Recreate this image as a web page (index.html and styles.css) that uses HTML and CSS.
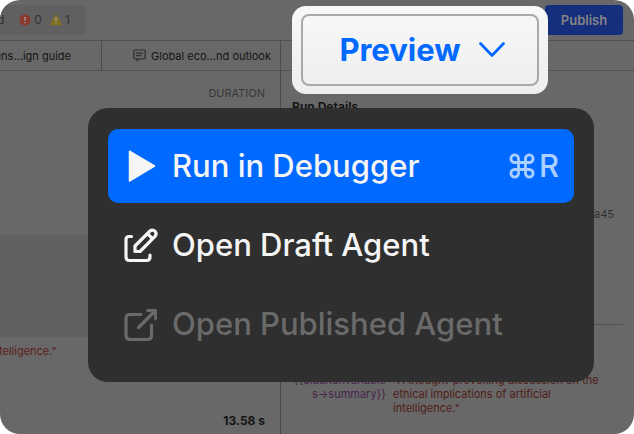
FILE: index.html
```html
<!DOCTYPE html>
<html lang="en">
<head>
<meta charset="utf-8">
<meta name="viewport" content="width=device-width, initial-scale=1">
<title>Agent debugger</title>
<link rel="stylesheet" href="styles.css">
</head>
<body>
<div class="app">
  <header class="toolbar">
    <div class="status">
      <span>d</span>
      <span class="issue">
        <svg class="issue-icon" viewBox="0 0 12 12" aria-hidden="true"><path d="M6 0 11.3 3v6L6 12 .7 9V3Z" fill="#8c372b"/><path d="M6 3v3.6M6 8v1.2" stroke="#a0a0a0" stroke-width="1.4"/></svg>
        0
      </span>
      <span class="issue">
        <svg class="issue-icon" viewBox="0 0 12 12" aria-hidden="true"><path d="M6 1.2 11.3 10.6H.7Z" fill="#81701f" stroke="#81701f" stroke-width="1.4" stroke-linejoin="round"/><path d="M6 3.6v3.6M6 8.4v1.2" stroke="#a0a0a0" stroke-width="1.4"/></svg>
        1
      </span>
    </div>
    <button class="publish" type="button">Publish</button>
  </header>

  <nav class="tabs">
    <a class="tab tab-first" href="#guide">ens...ign guide</a>
    <a class="tab tab-second" href="#outlook">
      <svg class="chat-icon" viewBox="0 0 13 13" fill="none" stroke="#2f2f2f" stroke-width="1.2" stroke-linecap="round" stroke-linejoin="round" aria-hidden="true"><path d="M2.2 1h8.6Q12.2 1 12.2 2.4v6Q12.2 9.8 10.8 9.8H6.4L4.2 11.8V9.8h-2Q.8 9.8.8 8.4v-6Q.8 1 2.2 1ZM3.4 4.1h6.2M3.4 6.7h4.4"/></svg>
      Global eco...nd outlook
    </a>
    <span class="tab-space"></span>
  </nav>

  <main class="content">
    <section class="log">
      <div class="log-head">DURATION</div>
      <div class="log-band"></div>
      <div class="log-text">telligence."</div>
      <div class="log-time">13.58 s</div>
    </section>
    <section class="details">
      <h2 class="details-title">Run Details</h2>
      <div class="run-id">a45</div>
      <hr class="rule">
      <dl class="variable">
        <dt>{{$launchvariable<br>s→summary}}</dt>
        <dd>"A thought-provoking discussion on the ethical implications of artificial intelligence."</dd>
      </dl>
    </section>
  </main>

  <div class="preview">
    <div class="preview-card">
      <button class="preview-button" type="button">
        Preview
        <svg class="chevron" viewBox="0 0 26 16" fill="none" stroke="#0069ff" stroke-width="2.7" stroke-linecap="round" stroke-linejoin="round" aria-hidden="true"><path d="M1.5 1.5 13 13.5 24.5 1.5"/></svg>
      </button>
    </div>
    <div class="menu">
      <button class="item item-active" type="button">
        <svg class="item-icon" viewBox="0 0 36 36" aria-hidden="true"><path d="M6.5 3.2 31.500 18 6.5 33Z" fill="#f5f5f5" stroke="#f5f5f5" stroke-width="1.5" stroke-linejoin="round"/></svg>
        <span>Run in Debugger</span>
        <span class="shortcut"><svg class="command" viewBox="0 0 26 26" fill="none" stroke="currentColor" stroke-width="2.8" aria-hidden="true"><path d="M9.5 9.5V5.700A3.800 3.800 0 1 0 5.700 9.500H20.300A3.800 3.800 0 1 0 16.500 5.700V20.300A3.800 3.800 0 1 0 20.300 16.500H5.700A3.800 3.800 0 1 0 9.500 20.300Z"/></svg>R</span>
      </button>
      <button class="item" type="button">
        <svg class="item-icon" viewBox="0 0 36 36" fill="none" stroke="currentColor" stroke-width="3.2" stroke-linecap="round" stroke-linejoin="round" aria-hidden="true"><path d="M8.500 9.500H6Q3 9.500 3 12.500V30Q3 33.500 6.500 33.500H23.500Q27 33.500 27 30V28M12 24.500V19L27 4Q29.500 2 32 4.300 34.200 6.800 32 9.400L17 24.500ZM24.500 6.700 29.300 11.500"/></svg>
        <span>Open Draft Agent</span>
      </button>
      <button class="item" type="button" disabled>
        <svg class="item-icon" viewBox="0 0 36 36" fill="none" stroke="currentColor" stroke-width="3.2" stroke-linecap="round" stroke-linejoin="round" aria-hidden="true"><path d="M18 8.500H7Q3 8.500 3 12.500V29.500Q3 33.500 7 33.500H24.500Q28.500 33.500 28.500 29.500V19M15.500 21.500 31 6"/><path d="M24.500 4.500H32.500V13" stroke-width="2.800"/></svg>
        <span>Open Published Agent</span>
      </button>
    </div>
  </div>
</div>
</body>
</html>
```
FILE: styles.css
```css
* {
  box-sizing: border-box;
}

body {
  margin: 0;
  background: #fff;
  font-family: Inter, sans-serif;
  font-size: 11px;
  line-height: 14px;
  color: #141414;
}

button {
  margin: 0;
  border: 0;
  font: inherit;
}

.app {
  position: relative;
  display: flex;
  flex-direction: column;
  min-height: 100vh;
  overflow: hidden;
  border-radius: 20px;
  background: #686868;
}

.toolbar {
  display: flex;
  align-items: center;
  justify-content: space-between;
  height: 41px;
  padding-right: 11px;
  border-bottom: 1px solid #515151;
}

.status {
  display: flex;
  align-items: center;
  gap: 8px;
  height: 30px;
  padding-right: 16px;
  border-radius: 0 6px 6px 0;
  background: #606060;
  color: #303030;
  font-size: 12px;
}

.status > :first-child {
  margin: 0 7px 0 -3px;
}

.issue {
  display: flex;
  align-items: center;
  gap: 3px;
}

.issue-icon {
  width: 12px;
  height: 12px;
}

.publish {
  width: 78px;
  height: 30px;
  padding: 0;
  border-radius: 4px;
  background: #152f7d;
  color: #858585;
  font-size: 13px;
  font-weight: 600;
}

.tabs {
  display: flex;
  height: 30px;
  border-bottom: 1px solid #515151;
}

.tab {
  display: flex;
  align-items: center;
  justify-content: flex-end;
  gap: 5px;
  border-right: 1px solid #4c4c4c;
  color: #141414;
  text-decoration: none;
  white-space: nowrap;
}

.tab-first {
  width: 102px;
  padding-right: 30px;
}

.tab-second {
  width: 179px;
  padding-right: 9px;
}

.tab-space {
  flex: 1;
}

.chat-icon {
  width: 13px;
  height: 13px;
}

.content {
  display: flex;
  flex: 1;
}

.log {
  display: flex;
  flex-direction: column;
  width: 281px;
  border-right: 1px solid #4c4c4c;
}

.log-head {
  padding: 15px 15px 0 0;
  color: #373737;
  text-align: right;
}

.log-band {
  height: 102px;
  margin-top: 135px;
  background: #616161;
}

.log-text {
  margin: 7px 0 0 -1px;
  color: #5c201c;
}

.log-time {
  margin-top: auto;
  padding: 0 15px 6px 0;
  font-size: 12px;
  font-weight: 700;
  text-align: right;
}

.details {
  flex: 1;
  padding: 29px 11px 0;
}

.details-title {
  margin: 0;
  font-size: 12px;
  font-weight: 700;
  line-height: 14px;
}

.run-id {
  margin-top: 93px;
  padding-right: 9px;
  color: #303030;
  text-align: right;
}

.rule {
  height: 1px;
  margin: 103px 0 0;
  border: 0;
  background: #505050;
}

.variable {
  display: grid;
  grid-template-columns: 94px 1fr;
  gap: 7px;
  margin: 48px 0 0;
}

.variable dt {
  color: #47244b;
  text-align: right;
}

.variable dd {
  margin: 0;
  padding-right: 16px;
  color: #501b17;
}

.preview {
  position: absolute;
  top: 6px;
  left: 88px;
  display: flex;
  flex-direction: column;
  gap: 14px;
  width: 506px;
}

.preview-card {
  align-self: flex-end;
  width: 256px;
  margin-right: 46px;
  padding: 8px 9px;
  border-radius: 14px;
  background: linear-gradient(#f8f8f8, #eee);
}

.preview-button {
  display: flex;
  align-items: center;
  justify-content: center;
  gap: 18px;
  width: 100%;
  height: 72px;
  padding: 0 0 0 4px;
  border: 2px solid #a9a9a9;
  border-radius: 8px;
  background: transparent;
  color: #0069ff;
  font-size: 31px;
  font-weight: 700;
}

.chevron {
  width: 26px;
  height: 16px;
}

.menu {
  display: flex;
  flex-direction: column;
  gap: 5px;
  padding: 21px 20px;
  border-radius: 20px;
  background: #2f2f2f;
}

.item {
  display: flex;
  align-items: center;
  gap: 13px;
  width: 100%;
  height: 74px;
  padding: 0 15px;
  border-radius: 10px;
  background: transparent;
  color: #f5f5f5;
  font-size: 31px;
  font-weight: 500;
  white-space: nowrap;
}

.item-active {
  background: #0069ff;
}

.item:disabled {
  color: #6a6a6a;
}

.item-icon {
  flex: none;
  width: 36px;
  height: 36px;
}

.shortcut {
  display: flex;
  align-items: center;
  gap: 4px;
  margin-left: auto;
  color: #acd0ff;
}

.command {
  width: 26px;
  height: 26px;
}
```
